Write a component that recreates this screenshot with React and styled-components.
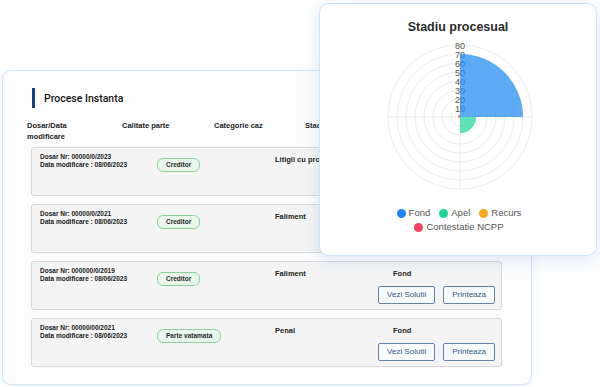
import React from "react";
import styled, { createGlobalStyle } from "styled-components";

const rows = [
  { dosar: "00000/0/2023", calitate: "Creditor", categorie: "Litigii cu profesionistii", stadiu: "Fond" },
  { dosar: "00000/0/2021", calitate: "Creditor", categorie: "Faliment", stadiu: "Fond" },
  { dosar: "000000/0/2019", calitate: "Creditor", categorie: "Faliment", stadiu: "Fond" },
  { dosar: "00000/00/2021", calitate: "Parte vatamata", categorie: "Penal", stadiu: "Fond" },
];

const legend = [
  { label: "Fond", color: "#1e88f0" },
  { label: "Apel", color: "#1fd69a" },
  { label: "Recurs", color: "#f7a823" },
  { label: "Contestatie NCPP", color: "#ef4463" },
];

// value + start/end angle (svg degrees, 0 = right, -90 = top)
const slices = [
  { value: 70, from: -90, to: 0, fill: "rgba(36,140,242,0.74)" },
  { value: 18, from: 0, to: 90, fill: "rgba(31,214,154,0.7)" },
  { value: 2, from: 90, to: 180, fill: "rgba(247,168,35,0.75)" },
  { value: 2.5, from: 180, to: 270, fill: "rgba(239,68,99,0.7)" },
];

const ticks = [10, 20, 30, 40, 50, 60, 70, 80];

const PolarChart = () => {
  const c = 80;
  const step = 9;
  const r = (v) => (v / 10) * step;
  const arc = ({ value, from, to }) => {
    const rad = r(value);
    const a0 = (from * Math.PI) / 180;
    const a1 = (to * Math.PI) / 180;
    const x0 = c + rad * Math.cos(a0);
    const y0 = c + rad * Math.sin(a0);
    const x1 = c + rad * Math.cos(a1);
    const y1 = c + rad * Math.sin(a1);
    return `M${c},${c} L${x0},${y0} A${rad},${rad} 0 0 1 ${x1},${y1} Z`;
  };
  return (
    <ChartSvg width="160" height="160" viewBox="0 0 160 160">
      {ticks.map((t) => (
        <circle key={t} cx={c} cy={c} r={r(t)} fill="none" stroke="#e8e8e8" strokeWidth="0.8" />
      ))}
      <line x1={c} y1={c - 72} x2={c} y2={c + 72} stroke="#e8e8e8" strokeWidth="0.8" />
      <line x1={c - 72} y1={c} x2={c + 72} y2={c} stroke="#e8e8e8" strokeWidth="0.8" />
      {ticks.map((t) => (
        <text
          key={t}
          x={c}
          y={c - r(t) + 0.5}
          textAnchor="middle"
          dominantBaseline="central"
          fontSize="9"
          fill="#555"
          fontFamily="'Liberation Sans', Arial, sans-serif"
        >
          {t}
        </text>
      ))}
      {slices.map((s) => (
        <path key={s.from} d={arc(s)} fill={s.fill} />
      ))}
    </ChartSvg>
  );
};

export default function App() {
  return (
    <>
      <GlobalStyle />
      <Stage>
        <Panel>
          <PanelTitle>Procese Instanta</PanelTitle>
          <HeaderGrid>
            <HeaderCell>Dosar/Data<br />modificare</HeaderCell>
            <HeaderCell>Calitate parte</HeaderCell>
            <HeaderCell>Categorie caz</HeaderCell>
            <HeaderCell>Stadiu procesual</HeaderCell>
          </HeaderGrid>
          <RowList>
            {rows.map((row) => (
              <CaseRow key={row.dosar}>
                <RowGrid>
                  <CaseInfo>
                    <div>Dosar Nr: {row.dosar}</div>
                    <div>Data modificare : 08/06/2023</div>
                  </CaseInfo>
                  <div>
                    <Badge>{row.calitate}</Badge>
                  </div>
                  <CellText>{row.categorie}</CellText>
                  <CellText>{row.stadiu}</CellText>
                </RowGrid>
                <Actions>
                  <ActionButton>Vezi Solutii</ActionButton>
                  <ActionButton>Printeaza</ActionButton>
                </Actions>
              </CaseRow>
            ))}
          </RowList>
        </Panel>

        <ChartCard>
          <ChartTitle>Stadiu procesual</ChartTitle>
          <PolarChart />
          <Legend>
            {legend.map((item) => (
              <LegendItem key={item.label}>
                <Dot $color={item.color} />
                {item.label}
              </LegendItem>
            ))}
          </Legend>
        </ChartCard>
      </Stage>
    </>
  );
}

// Styled Components
const GlobalStyle = createGlobalStyle`
  html, body {
    margin: 0;
    padding: 0;
    background: #ffffff;
  }
  body {
    font-family: "Liberation Sans", Arial, sans-serif;
    color: #222;
  }
  * {
    box-sizing: border-box;
  }
`;

const Stage = styled.div`
  position: relative;
  width: 600px;
  height: 387px;
  overflow: hidden;
  padding: 70px 0 0 2px;
`;

const Panel = styled.section`
  width: 530px;
  height: 315px;
  background: #fdfdfe;
  border: 1px solid #d2e6f8;
  border-radius: 9px;
  box-shadow: 0 2px 10px rgba(150, 185, 220, 0.18);
  padding: 17px 0 0 24px;
  display: flex;
  flex-direction: column;
`;

const PanelTitle = styled.h2`
  margin: 0 0 0 5px;
  height: 20px;
  display: flex;
  align-items: center;
  border-left: 3px solid #1b3f78;
  padding-left: 9px;
  font-family: Roboto, "Liberation Sans", Arial, sans-serif;
  font-weight: 500;
  font-size: 10.5px;
  color: #151515;
`;

const HeaderGrid = styled.div`
  display: grid;
  grid-template-columns: 95px 92px 91px 1fr;
  margin-top: 12px;
`;

const HeaderCell = styled.div`
  font-size: 7.5px;
  font-weight: 700;
  line-height: 11px;
  color: #1c1c1c;
  white-space: nowrap;
`;

const RowList = styled.div`
  display: flex;
  flex-direction: column;
  gap: 8px;
  margin: 5px 0 0 4px;
  width: 471px;
`;

const CaseRow = styled.div`
  height: 49px;
  background: #f4f4f4;
  border: 1px solid #d6d6d6;
  border-radius: 3px;
  padding: 5px 6px 6px 8px;
  display: flex;
  flex-direction: column;
`;

const RowGrid = styled.div`
  display: grid;
  grid-template-columns: 117px 118px 118px 1fr;
  align-items: start;
`;

const CaseInfo = styled.div`
  font-size: 6.5px;
  font-weight: 700;
  line-height: 7.5px;
  color: #222;
  white-space: nowrap;
`;

const Badge = styled.span`
  display: inline-block;
  height: 14px;
  line-height: 12px;
  padding: 0 8px;
  border: 1px solid #8dd29e;
  border-radius: 6px;
  background: #e9f6ec;
  font-size: 6.5px;
  font-weight: 700;
  color: #2a2a2a;
  white-space: nowrap;
`;

const CellText = styled.div`
  font-size: 7.5px;
  font-weight: 700;
  line-height: 14px;
  color: #222;
  white-space: nowrap;
`;

const Actions = styled.div`
  margin-top: auto;
  display: flex;
  justify-content: flex-end;
  gap: 8px;
`;

const ActionButton = styled.button`
  height: 18px;
  padding: 0 8px;
  border: 1px solid #6483a8;
  border-radius: 2px;
  background: #f8fafc;
  color: #33598a;
  font-family: "Liberation Sans", Arial, sans-serif;
  font-size: 8px;
  line-height: 16px;
  cursor: pointer;
`;

const ChartCard = styled.div`
  position: absolute;
  left: 319px;
  top: 3px;
  width: 278px;
  height: 253px;
  background: #ffffff;
  border: 1px solid #cfe4f9;
  border-radius: 10px;
  box-shadow: 0 4px 18px rgba(120, 160, 200, 0.25);
  display: flex;
  flex-direction: column;
  align-items: center;
  padding-top: 15px;
`;

const ChartTitle = styled.h3`
  margin: 0;
  font-size: 12.5px;
  line-height: 16px;
  font-weight: 700;
  color: #2b2b2b;
`;

const ChartSvg = styled.svg`
  display: block;
  margin: 2px 0 0 4px;
`;

const Legend = styled.div`
  display: flex;
  flex-wrap: wrap;
  justify-content: center;
  column-gap: 9px;
  row-gap: 2px;
  width: 140px;
  margin: 10px 0 0 2px;
`;

const LegendItem = styled.div`
  display: flex;
  align-items: center;
  gap: 3px;
  font-size: 9.5px;
  line-height: 12px;
  color: #555;
  white-space: nowrap;
`;

const Dot = styled.span`
  width: 9px;
  height: 9px;
  border-radius: 50%;
  background: ${(p) => p.$color};
`;
